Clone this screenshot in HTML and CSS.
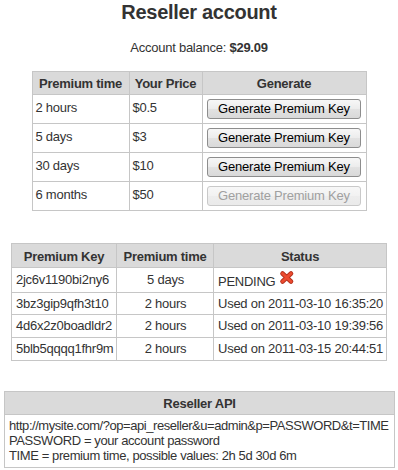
FILE: index.html
```html
<!DOCTYPE html>
<html>
<head>
<meta charset="utf-8">
<title>Reseller account</title>
<link rel="stylesheet" href="styles.css">
</head>
<body>
<h1 class="title">Reseller account</h1>
<p class="balance">Account balance: <b>$29.09</b></p>

<table class="tbl tbl-plans">
  <thead>
    <tr>
      <th class="c-time">Premium time</th>
      <th class="c-price">Your Price</th>
      <th class="c-gen">Generate</th>
    </tr>
  </thead>
  <tbody>
    <tr><td>2 hours</td><td>$0.5</td><td class="center"><button class="btn">Generate Premium Key</button></td></tr>
    <tr><td>5 days</td><td>$3</td><td class="center"><button class="btn">Generate Premium Key</button></td></tr>
    <tr><td>30 days</td><td>$10</td><td class="center"><button class="btn">Generate Premium Key</button></td></tr>
    <tr><td>6 months</td><td>$50</td><td class="center"><button class="btn" disabled>Generate Premium Key</button></td></tr>
  </tbody>
</table>

<table class="tbl tbl-keys">
  <thead>
    <tr>
      <th class="c-key">Premium Key</th>
      <th class="c-ptime">Premium time</th>
      <th class="c-status">Status</th>
    </tr>
  </thead>
  <tbody>
    <tr class="row-pending"><td>2jc6v1190bi2ny6</td><td class="center">5 days</td><td>PENDING <svg class="x-icon" width="16" height="16" viewBox="0 0 16 16"><path d="M3.5 3.5 L12 11.5 M12 3.5 L3.5 11.5" stroke="#b3311d" stroke-width="4.6" stroke-linecap="round" fill="none"/><path d="M3.5 3.5 L12 11.5 M12 3.5 L3.5 11.5" stroke="#ec4b2f" stroke-width="2.8" stroke-linecap="round" fill="none"/></svg></td></tr>
    <tr class="row-a"><td>3bz3gip9qfh3t10</td><td class="center">2 hours</td><td>Used on 2011-03-10 16:35:20</td></tr>
    <tr class="row-b"><td>4d6x2z0boadldr2</td><td class="center">2 hours</td><td>Used on 2011-03-10 19:39:56</td></tr>
    <tr class="row-b"><td>5blb5qqqq1fhr9m</td><td class="center">2 hours</td><td>Used on 2011-03-15 20:44:51</td></tr>
  </tbody>
</table>

<table class="tbl tbl-api">
  <thead>
    <tr><th>Reseller API</th></tr>
  </thead>
  <tbody>
    <tr><td class="api-body"><span class="api-url">http://mysite.com/?op=api_reseller&amp;u=admin&amp;p=PASSWORD&amp;t=TIME</span><br>PASSWORD = your account password<br>TIME = premium time, possible values: 2h 5d 30d 6m</td></tr>
  </tbody>
</table>
</body>
</html>
```

FILE: styles.css
```css
html, body {
  margin: 0;
  padding: 0;
  background: #ffffff;
}

body {
  font-family: "Liberation Sans", Arial, sans-serif;
  font-size: 13px;
  line-height: 16px;
  letter-spacing: -0.25px;
  color: #333333;
}

.title {
  margin: 0;
  font-size: 20px;
  line-height: 24px;
  font-weight: bold;
  letter-spacing: -0.3px;
  text-align: center;
  color: #333333;
}

.balance {
  margin: 16px 0 0;
  text-align: center;
  line-height: 16px;
}

.balance b {
  font-weight: bold;
}

.tbl {
  border-collapse: separate;
  border-spacing: 0;
  table-layout: fixed;
  border-left: 1px solid #c6c6c6;
  border-top: 1px solid #c6c6c6;
}

.tbl th,
.tbl td {
  box-sizing: border-box;
  border-right: 1px solid #c6c6c6;
  border-bottom: 1px solid #c6c6c6;
  padding: 0 3px;
  vertical-align: middle;
  text-align: left;
  white-space: nowrap;
}

.tbl th {
  background: #dadada;
  font-weight: bold;
  text-align: center;
  height: 23px;
  padding-top: 1px;
}

.tbl .center {
  text-align: center;
}

/* plans table */
.tbl-plans {
  width: 335px;
  margin: 15px auto 0;
}

.tbl-plans .c-time { width: 97px; }
.tbl-plans .c-price { width: 73px; }
.tbl-plans .c-gen { width: 164px; }

.tbl-plans td {
  height: 29px;
  padding-bottom: 2px;
}

.tbl-plans td.center {
  padding: 0 4px 0;
}

.btn {
  display: inline-block;
  box-sizing: border-box;
  width: 154px;
  height: 20px;
  margin: 0;
  padding: 0;
  font-family: "Liberation Sans", Arial, sans-serif;
  font-size: 13px;
  line-height: 16px;
  letter-spacing: -0.2px;
  color: #000000;
  border: 1px solid #8d8d8d;
  border-radius: 3px;
  background: linear-gradient(#f7f7f7, #ececec 50%, #e2e2e2 51%, #d9d9d9);
  vertical-align: middle;
}

.btn:disabled {
  color: #a0a0a0;
  border-color: #c9c9c9;
  background: linear-gradient(#f7f7f7, #f2f2f2 50%, #ededed 51%, #eaeaea);
}

/* keys table */
.tbl-keys {
  width: 376px;
  margin: 32px auto 0;
}

.tbl-keys .c-key { width: 105px; }
.tbl-keys .c-ptime { width: 97px; }
.tbl-keys .c-status { width: 173px; }

.tbl-keys th {
  height: 24px;
  padding-top: 2px;
}

.tbl-keys td {
  padding-left: 4px;
  padding-right: 3px;
}

.tbl-keys .row-pending td {
  height: 25px;
  padding-bottom: 0;
}

.tbl-keys .row-a td {
  height: 22px;
}

.tbl-keys .row-b td {
  height: 23px;
}

.x-icon {
  display: inline-block;
  vertical-align: baseline;
  width: 16px;
  height: 16px;
}

/* api table */
.tbl-api {
  width: 391px;
  margin: 30px 0 0 4px;
}

.tbl-api th {
  height: 23px;
  padding-top: 2px;
}

.tbl-api .api-body {
  padding: 3px 3px 4px 4px;
  line-height: 15px;
  height: 53px;
  vertical-align: top;
  letter-spacing: -0.4px;
}

.tbl-api .api-url {
  letter-spacing: -0.45px;
}
```
